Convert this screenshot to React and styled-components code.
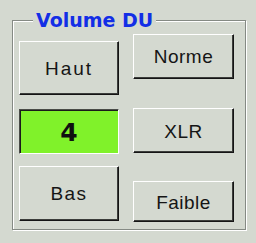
import React from "react";
import styled, {createGlobalStyle} from "styled-components";

const GlobalStyle = createGlobalStyle`
    html, body {
        margin: 0;
        padding: 0;
        background-color: #d4d9d0;
    }
`;

const Page = styled.div`
    width: 256px;
    height: 243px;
    box-sizing: border-box;
    padding: 9px 0 0 12px;
    background-color: #d4d9d0;
`;

const GroupBox = styled.fieldset`
    margin: 0;
    padding: 0;
    width: 234px;
    height: 221px;
    box-sizing: border-box;
    border: 1px solid #858a84;
    box-shadow: inset 1px 1px 0 #ffffff, 1px 1px 0 #ffffff;
`;

const Title = styled.legend`
    margin-left: 20px;
    padding: 0 3px;
    background-color: #d4d9d0;
    color: #122ee6;
    font-family: "DejaVu Sans", Verdana, sans-serif;
    font-weight: bold;
    font-size: 19px;
    line-height: 22px;
`;

const Columns = styled.div`
    display: flex;
    gap: 14px;
    padding-left: 6px;
`;

const Column = styled.div`
    display: flex;
    flex-direction: column;
    width: ${p => p.$width}px;
    padding-top: ${p => p.$top}px;
`;

const Button = styled.div`
    height: ${p => p.$height}px;
    margin-top: ${p => p.$gap || 0}px;
    box-sizing: border-box;
    display: flex;
    align-items: center;
    justify-content: center;
    background-color: #d4d9d0;
    border-top: 1px solid #ffffff;
    border-left: 1px solid #ffffff;
    border-right: 1px solid #151515;
    border-bottom: 1px solid #151515;
    box-shadow: inset -1px -1px 0 #3c3e3b;
    color: #151515;
    font-family: "Liberation Sans", Arial, sans-serif;
    font-size: 19px;
    letter-spacing: ${p => p.$spacing || 0}px;
    padding-top: ${p => p.$drop || 2}px;
`;

const Display = styled.div`
    height: ${p => p.$height}px;
    margin-top: ${p => p.$gap || 0}px;
    box-sizing: border-box;
    display: flex;
    align-items: center;
    justify-content: center;
    background-color: #80f22a;
    border-top: 1px solid #4a4c48;
    border-left: 1px solid #4a4c48;
    border-right: 1px solid #ffffff;
    border-bottom: 1px solid #ffffff;
    box-shadow: inset 1px 1px 0 #1a1a1a;
    color: #101010;
    font-family: "DejaVu Sans", Verdana, sans-serif;
    font-weight: bold;
    font-size: 25px;
    padding-top: 1px;
`;

const App = () => {
    return (
        <>
            <GlobalStyle/>
            <Page>
                <GroupBox>
                    <Title>Volume DU</Title>
                    <Columns>
                        <Column $width={100} $top={10}>
                            <Button $height={54} $spacing={2}>Haut</Button>
                            <Display $height={45} $gap={14}>4</Display>
                            <Button $height={55} $gap={12} $spacing={1.5} $drop={1}>Bas</Button>
                        </Column>
                        <Column $width={101} $top={3}>
                            <Button $height={45} $spacing={0.5} $drop={1}>Norme</Button>
                            <Button $height={45} $gap={29} $spacing={0.5}>XLR</Button>
                            <Button $height={41} $gap={28} $spacing={0.5}>Faible</Button>
                        </Column>
                    </Columns>
                </GroupBox>
            </Page>
        </>
    );
};

export default App;
